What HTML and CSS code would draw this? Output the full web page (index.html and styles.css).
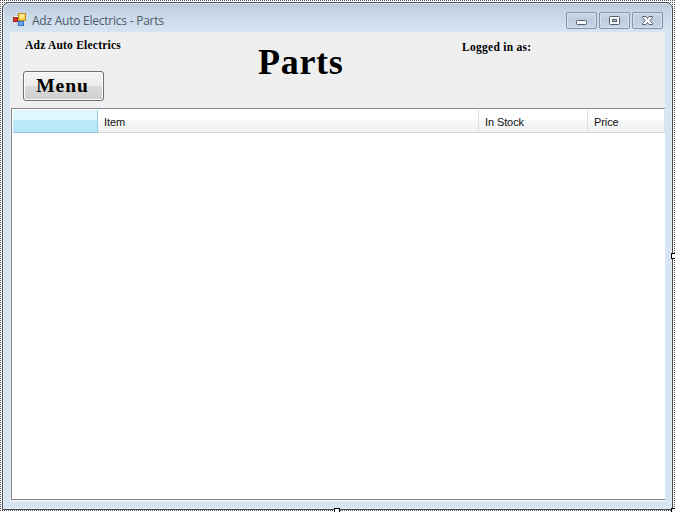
FILE: index.html
```html
<!DOCTYPE html>
<html lang="en">
<head>
<meta charset="utf-8">
<title>Adz Auto Electrics - Parts</title>
<link rel="stylesheet" href="styles.css">
</head>
<body>
<div class="designer">
  <main class="window">
    <header class="titlebar">
      <svg class="app-icon" width="14" height="14" viewBox="0 0 14 14">
        <path d="M.5 2.500h5v2h-5zM.5 9.500h3v3h-3z" fill="#f3f5f7" stroke="#c3ccd6"/>
        <rect x="5.500" y=".5" width="7" height="7" fill="#ffd34c" stroke="#b98a1d"/>
        <rect x="7" y="1.500" width="4" height="3" fill="#fff0a0"/>
        <rect x=".5" y="4.500" width="4" height="4" fill="#d83a30" stroke="#a8241e"/>
        <rect x="5.500" y="8.500" width="5" height="4" fill="#6ba5ee" stroke="#3973c6"/>
        <path d="M12.500 9v4" stroke="#dbe4ee"/>
      </svg>
      <span class="caption">Adz Auto Electrics - Parts</span>
      <div class="controls">
        <span class="control"><svg width="29" height="15" viewBox="0 0 29 15"><rect x="9.500" y="7.500" width="10" height="4" rx="1" fill="#fafbfd" stroke="#545e6b"/></svg></span>
        <span class="control"><svg width="29" height="15" viewBox="0 0 29 15"><rect x="9.500" y="3.500" width="10" height="8" rx="1" fill="#fafbfd" stroke="#545e6b"/><rect x="12.500" y="6.500" width="4" height="2" fill="#b9c9dc" stroke="#545e6b"/></svg></span>
        <span class="control"><svg width="29" height="15" viewBox="0 0 29 15"><path d="M9.500 3.500h3.500l1.500 2 1.500-2h3.500v1l-2.500 3 2.500 3v1H16l-1.500-2-1.500 2H9.500v-1l2.500-3-2.500-3z" fill="#fafbfd" stroke="#545e6b"/></svg></span>
      </div>
    </header>
    <section class="client">
      <div class="banner">
        <div class="brand">
          <span class="label company">Adz Auto Electrics</span>
          <button class="menu"><span>Menu</span></button>
        </div>
        <h1>Parts</h1>
        <span class="label login">Logged in as:</span>
      </div>
      <div class="list">
        <div class="columns">
          <span class="column selected"></span>
          <span class="column">Item</span>
          <span class="column">In Stock</span>
          <span class="column">Price</span>
        </div>
      </div>
    </section>
  </main>
  <i class="grip grip-right"></i>
  <i class="grip grip-bottom"></i>
  <i class="grip grip-corner"></i>
</div>
</body>
</html>
```
FILE: styles.css
```css
* { box-sizing: border-box; }
body { margin: 0; background: #fff; overflow: hidden; }
.designer {
  position: relative;
  width: 675px;
  height: 512px;
  padding: 2px;
  overflow: hidden;
  background: conic-gradient(#fff 0 75%, #555 0) 0 0 / 2px 2px;
}
.window {
  width: 671px;
  height: 508px;
  padding: 0 7px 8px;
  border: 1px solid #434b54;
  border-radius: 7px 7px 0 0;
  background: linear-gradient(#bccbdc 0, #cbd9e8 14px, #d7e4f2 29px, #d7e5f3 100%);
  box-shadow: inset 0 0 0 1px #e5eef7;
}
.titlebar {
  display: flex;
  align-items: flex-start;
  height: 29px;
  padding: 9px 2px 0 3px;
}
.app-icon { margin-top: 1px; }
.caption {
  margin: 0 0 0 5px;
  font: 12px/17px "Open Sans", "Noto Sans", sans-serif;
  letter-spacing: -0.24px;
  color: #4c5a69;
}
.controls { display: flex; gap: 2px; margin-left: auto; }
.control {
  width: 31px;
  height: 17px;
  border: 1px solid #8493a9;
  border-radius: 2px;
  background: linear-gradient(#c7d5e5, #bdcddf 50%, #c8d7e8);
  box-shadow: inset 0 0 0 1px #d5e1ee;
}
.control svg { display: block; }
.client {
  display: flex;
  flex-direction: column;
  width: 655px;
  height: 470px;
  padding-left: 1px;
  padding-bottom: 2px;
  background: #efefef;
}
.banner {
  display: grid;
  grid-template-columns: 247px 204px 1fr;
  height: 76px;
  font-family: "Liberation Serif", serif;
  font-weight: bold;
  color: #000;
}
.brand { display: flex; flex-direction: column; align-items: flex-start; }
.label { font-size: 11.5px; line-height: 14px; white-space: nowrap; }
.company { margin: 6px 0 0 14px; letter-spacing: 0.22px; }
.login { margin-top: 8px; letter-spacing: 0.28px; }
.menu {
  width: 81px;
  height: 30px;
  margin: 19px 0 0 12px;
  padding: 0 2px 0 0;
  border: 1px solid #707070;
  border-radius: 3px;
  background: linear-gradient(#f2f2f2 0 12%, #ebebeb 50%, #dadada 51%, #cfcfcf);
  box-shadow: inset 0 0 0 1px #fafafa;
  font: bold 19.5px/26px "Liberation Serif", serif;
  letter-spacing: 0.9px;
  color: #000;
}
h1 {
  margin: 10px 0 0;
  font-size: 36px;
  line-height: 40px;
  letter-spacing: 0.7px;
}
.list {
  flex: 1;
  padding: 1px;
  border: solid #828790;
  border-width: 1px 0 1px 1px;
  background: #fff;
}
.columns {
  display: grid;
  grid-template-columns: 85px 381px 109px 77px;
  height: 23px;
}
.column {
  height: 23px;
  padding: 1px 0 0 6px;
  border-right: 1px solid #dedfe1;
  border-bottom: 1px solid #d5d5d5;
  background: linear-gradient(#fff 0 45%, #f7f8fa 46%, #f1f2f4);
  font: 11px/22px "Liberation Sans", sans-serif;
  letter-spacing: -0.1px;
  color: #111;
}
.selected {
  border-color: #93c9e3;
  background: linear-gradient(#def6fe 0 45%, #bee9fb 46%, #b8e7fa);
}
.grip { position: absolute; width: 6px; height: 6px; border: 1px solid #000; background: #fff; }
.grip-right { left: 671px; top: 253px; }
.grip-bottom { left: 334px; top: 508px; }
.grip-corner { left: 671px; top: 508px; }
```
